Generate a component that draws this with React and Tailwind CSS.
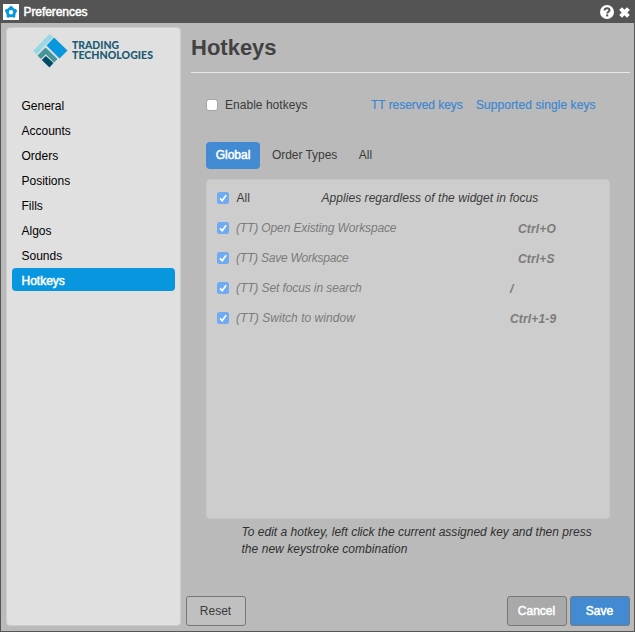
import React from 'react';

const faux = '[-webkit-text-stroke:0.5px_currentColor]';

function Check() {
  return (
    <svg className="block h-3 w-3 shrink-0" viewBox="0 0 12 12">
      <rect width="12" height="12" rx="2.5" fill="#70aaf0" />
      <path d="M3 6.4 L5.2 8.7 L9.1 3.2" fill="none" stroke="#fff" strokeWidth="1.7" />
    </svg>
  );
}

function Logo() {
  return (
    <div className="ml-[26px] mt-[6px] flex h-[35px]">
      <svg className="h-[35px] w-9 shrink-0" viewBox="0 0 36 35">
        <path d="M0 17 L16.5 0 L20 3.2 L3.5 20.5 Z" fill="#98d7e6" />
        <path d="M13.5 11.5 L21 3.5 L34.5 16.5 L26.5 24.5 Z" fill="#0797dd" />
        <path d="M4.5 21.5 L12.5 13.5 L24.5 25 L21 28.5 L12.8 20.3 L8 25 Z" fill="#43969a" />
        <path d="M8.8 26 L12.8 22 L20.5 29 L16.5 33.5 Z" fill="#024b68" />
      </svg>
      <svg className="ml-[3px] h-[35px] w-[90px] shrink-0" viewBox="0 0 90 35" fill="#1b5b73" fontFamily="Lato, sans-serif" fontWeight="900" fontSize="11">
        <text x="0" y="15.2" textLength="47" lengthAdjust="spacingAndGlyphs">TRADING</text>
        <text x="0" y="25.2" textLength="81" lengthAdjust="spacingAndGlyphs">TECHNOLOGIES</text>
      </svg>
    </div>
  );
}

const pages = ['General', 'Accounts', 'Orders', 'Positions', 'Fills', 'Algos', 'Sounds', 'Hotkeys'];
const keys = [
  ['Open Existing Workspace', 'Ctrl+O', 'pl-2', 'tracking-[-0.13px]'],
  ['Save Workspace', 'Ctrl+S', 'pl-2', 'tracking-[-0.22px]'],
  ['Set focus in search', '/', '', 'tracking-[-0.1px]'],
  ['Switch to window', 'Ctrl+1-9', '', 'tracking-[0.04px]'],
];

export default function App() {
  return (
    <div className="flex h-[632px] w-[635px] flex-col overflow-hidden bg-[#bababa] font-['Liberation_Sans',Arial,sans-serif] text-xs leading-[17px] text-[#3b3b3b]">
      <header className="flex h-[23px] shrink-0 items-center bg-[#545454] pl-[3px] pr-[5px] text-white">
        <svg className="h-4 w-4" viewBox="0 0 16 16">
          <rect width="16" height="16" fill="#fff" />
          <circle cx="8" cy="8.2" r="3.6" fill="none" stroke="#0797dd" strokeWidth="2.8" />
          <g fill="#0797dd">
            <circle cx="8" cy="3.8" r="1.9" />
            <circle cx="3.8" cy="6.9" r="1.8" />
            <circle cx="12.2" cy="6.9" r="1.8" />
            <circle cx="5.3" cy="12" r="1.8" />
            <circle cx="10.7" cy="12" r="1.8" />
          </g>
        </svg>
        <span className={`ml-[4.5px] mt-[2px] tracking-[-0.07px] ${faux}`}>Preferences</span>
        <svg className="ml-auto h-[14px] w-[14px]" viewBox="0 0 14 14">
          <circle cx="7" cy="7" r="7" fill="#fff" />
          <path d="M4.5 5.5 C4.7 3.8 5.8 3.2 7.1 3.2 C8.5 3.2 9.5 4.1 9.5 5.2 C9.5 6.8 7.2 6.7 7.2 8.5" fill="none" stroke="#545454" strokeWidth="2" />
          <path d="M6.1 9.4h2.1v2h-2.1z" fill="#545454" />
        </svg>
        <svg className="ml-[5px] mt-px h-[11px] w-[11px]" viewBox="0 0 11 11">
          <path d="M1.6 1.6L9.4 9.4M9.4 1.6L1.6 9.4" stroke="#fff" strokeWidth="4" />
        </svg>
      </header>

      <div className="flex min-h-0 flex-1 border-x border-b border-[#555]">
        <aside className="ml-[5px] mt-1 h-[599px] w-[175px] shrink-0 rounded-[4px] border border-[#cdcdcd] bg-[#e0e0e0] text-black">
          <Logo />
          <nav className="mt-[23px] px-[5px]">
            {pages.map((p) => (
              <div key={p} className="flex h-[25px] items-center">
                <div className={`h-[23px] w-full rounded-[4px] pl-[9.5px] pt-[5px] ${p === 'Hotkeys' ? 'bg-[#0896df] text-white ' + faux : ''}`}>{p}</div>
              </div>
            ))}
          </nav>
        </aside>

        <main className="ml-[5px] flex min-w-0 flex-1 flex-col">
          <h1 className="ml-[5px] mr-1 h-[50px] border-b border-[#e8e8e8] pt-[12px] text-[22px] font-bold leading-[25px] text-[#424242]">Hotkeys</h1>
          <div className="ml-5 mt-[23px] flex h-[18px] items-center">
            <span className="h-3 w-3 rounded-[3px] border border-[#a5a5a5] bg-white" />
            <span className="ml-[7px] w-[146px] pt-px tracking-[0.03px]">Enable hotkeys</span>
            <span className="w-[105px] pt-px tracking-[-0.05px] text-[#3d87d2] [-webkit-text-stroke:0.2px_currentColor]">TT reserved keys</span>
            <span className="whitespace-nowrap pt-px tracking-[0.07px] text-[#3d87d2] [-webkit-text-stroke:0.2px_currentColor]">Supported single keys</span>
          </div>
          <div className="ml-5 mt-7 flex h-[27px] items-center">
            <span className={`flex h-[27px] w-[54px] items-center justify-center rounded-[4px] bg-[#428bd2] text-white ${faux}`}>Global</span>
            <span className="ml-3 tracking-[-0.05px]">Order Types</span>
            <span className="ml-[21.5px]">All</span>
          </div>
          <section className="ml-5 mt-[10px] h-[340px] w-[404px] rounded-[4px] border border-[#c7c7c7] bg-[#cdcdcd] pl-[10px] pt-[3px]">
            <div className="flex h-[30px] items-center">
              <Check />
              <span className="ml-[7.5px] w-[85px] pt-px">All</span>
              <span className="pt-px italic tracking-[0.05px]">Applies regardless of the widget in focus</span>
            </div>
            {keys.map(([name, key, inset, tracking]) => (
              <div key={name} className="flex h-[30px] items-center italic text-[#7b7b7b]">
                <Check />
                <span className={`ml-[7px] w-[274px] pt-px ${tracking}`}>(TT) {name}</span>
                <span className={`pt-[3px] font-bold tracking-[0.15px] ${inset}`}>{key}</span>
              </div>
            ))}
          </section>
          <p className="ml-[55.5px] mt-[5px] w-[370px] italic tracking-[0.01px] text-[#303030]">To edit a hotkey, left click the current assigned key and then press<br /><span className="tracking-[0.04px]">the new keystroke combination</span></p>
          <footer className="mb-[5px] mr-1 mt-auto flex h-[30px] gap-[3px]">
            <button className="w-[60px] rounded-[3px] border border-[#777] bg-[#c0c0c0] pr-px">Reset</button>
            <button className={`ml-auto w-[60px] rounded-[3px] border border-[#777] bg-[#a9a9a9] pr-px text-white ${faux}`}>Cancel</button>
            <button className={`w-[60px] rounded-[3px] border border-[#777] bg-[#428bd2] pr-px text-white ${faux}`}>Save</button>
          </footer>
        </main>
      </div>
    </div>
  );
}
